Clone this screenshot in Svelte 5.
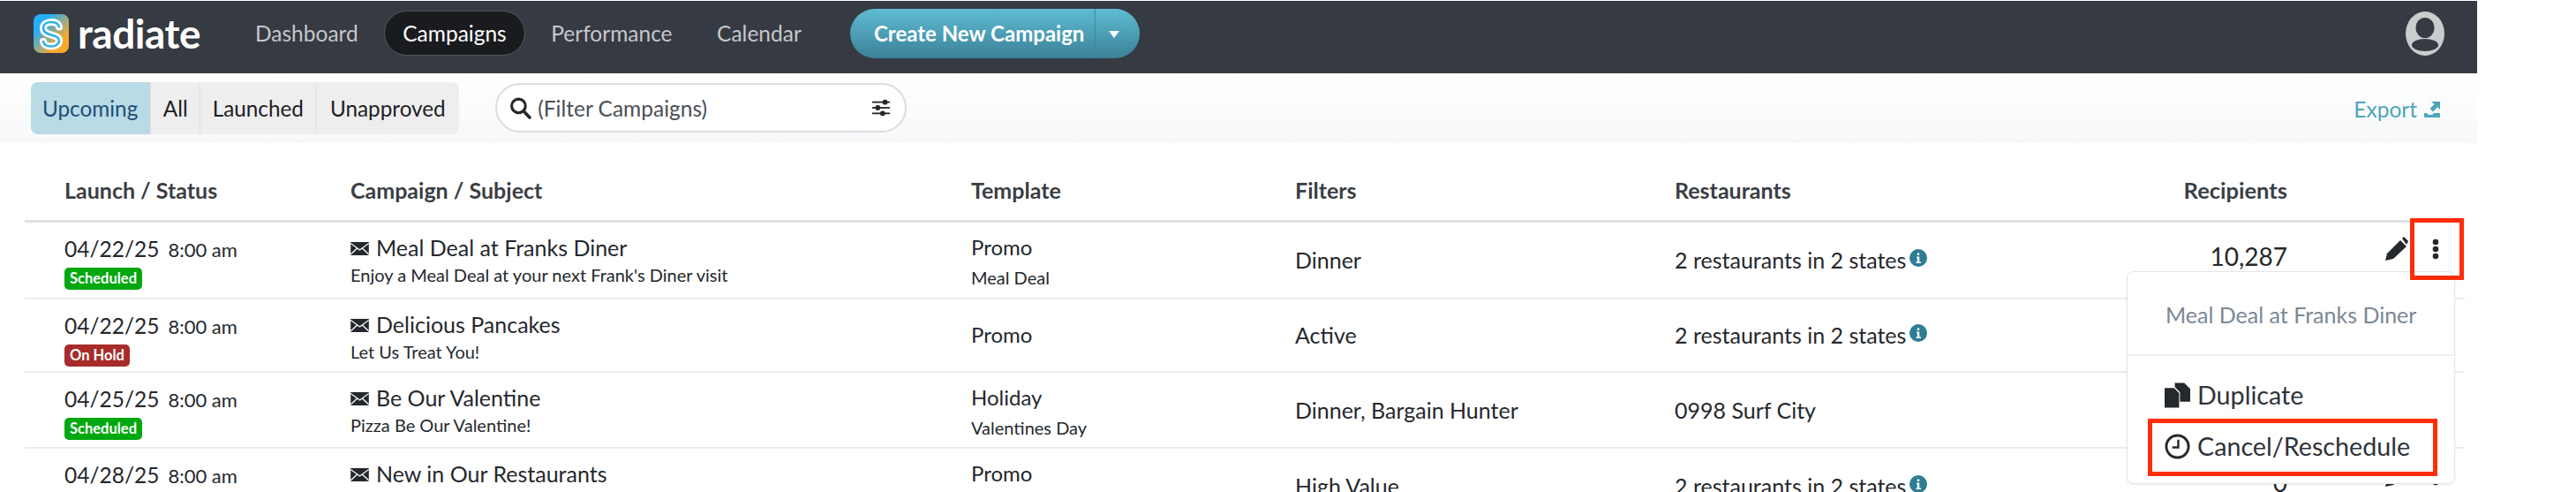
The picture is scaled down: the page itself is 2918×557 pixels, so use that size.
<script lang="ts">
	const navLinks = [
		{ label: 'Dashboard', active: false },
		{ label: 'Campaigns', active: true },
		{ label: 'Performance', active: false },
		{ label: 'Calendar', active: false }
	];

	const tabs = ['Upcoming', 'All', 'Launched', 'Unapproved'];

	const rows = [
		{ date: '04/22/25', status: 'Scheduled', name: 'Meal Deal at Franks Diner', subject: "Enjoy a Meal Deal at your next Frank's Diner visit", template: 'Promo', sub: 'Meal Deal', tall: true, filters: 'Dinner', places: '2 restaurants in 2 states', info: true, recipients: '10,287' },
		{ date: '04/22/25', status: 'On Hold', name: 'Delicious Pancakes', subject: 'Let Us Treat You!', template: 'Promo', sub: '', tall: false, filters: 'Active', places: '2 restaurants in 2 states', info: true, recipients: '' },
		{ date: '04/25/25', status: 'Scheduled', name: 'Be Our Valentine', subject: 'Pizza Be Our Valentine!', template: 'Holiday', sub: 'Valentines Day', tall: true, filters: 'Dinner, Bargain Hunter', places: '0998 Surf City', info: false, recipients: '' },
		{ date: '04/28/25', status: '', name: 'New in Our Restaurants', subject: '', template: 'Promo', sub: '', tall: true, filters: 'High Value', places: '2 restaurants in 2 states', info: true, recipients: '0' }
	];
</script>

<div class="page">
	<header class="topbar">
		<div class="brand">
			<svg class="logo" viewBox="0 0 40 44">
				<defs>
					<linearGradient id="logoGrad" x1="0" y1="0" x2="1" y2="1">
						<stop offset="0.25" stop-color="#26aef8" />
						<stop offset="0.75" stop-color="#f8a92c" />
					</linearGradient>
				</defs>
				<rect width="40" height="44" rx="8" fill="url(#logoGrad)" />
				<path d="M29 14.500C28 10 24 9 20 9c-5 0-9 2.500-9 7s4 6 9 7.500 9 2.500 9 6.500-4 6.500-9 6.500c-4 0-8-1-9-5.500" fill="none" stroke="#fff" stroke-width="8" stroke-linecap="round" />
				<path d="M29 14.500C28 10 24 9 20 9c-5 0-9 2.500-9 7s4 6 9 7.500 9 2.500 9 6.500-4 6.500-9 6.500c-4 0-8-1-9-5.500" fill="none" stroke="#2bb0ec" stroke-width="2.500" stroke-linecap="round" />
			</svg>
			<span class="wordmark">radiate</span>
		</div>
		<nav class="nav">
			{#each navLinks as link}
				<span class="nav-link" class:active={link.active}>{link.label}</span>
			{/each}
		</nav>
		<div class="create">
			<span class="create-main">Create New Campaign</span>
			<span class="create-caret"></span>
		</div>
		<svg class="avatar" viewBox="0 0 44 50">
			<ellipse cx="22" cy="25" rx="22" ry="25" fill="#cacccd" />
			<ellipse cx="22" cy="18.500" rx="10.500" ry="11.500" fill="#363a42" />
			<ellipse cx="22" cy="38" rx="15" ry="7" fill="#363a42" />
		</svg>
	</header>

	<div class="toolbar">
		<div class="tabs">
			{#each tabs as tab, i}
				<span class="tab" class:selected={i === 0}>{tab}</span>
			{/each}
		</div>
		<div class="search">
			<svg class="search-icon" viewBox="0 0 24 24">
				<circle cx="10" cy="10" r="7.500" fill="none" stroke="#25282d" stroke-width="3" />
				<path d="M15.500 15.500 22 22.500" stroke="#25282d" stroke-width="3.500" stroke-linecap="round" />
			</svg>
			<span class="search-text">(Filter Campaigns)</span>
			<svg class="sliders" viewBox="0 0 24 22" fill="#25282d">
				<rect x="1" y="3" width="22" height="2" />
				<rect x="1" y="10" width="22" height="2" />
				<rect x="1" y="17" width="22" height="2" />
				<circle cx="17" cy="4" r="3.200" />
				<circle cx="8" cy="11" r="3.200" />
				<circle cx="14" cy="18" r="3.200" />
			</svg>
		</div>
		<div class="export">
			<span>Export</span>
			<svg class="export-icon" viewBox="0 0 20 20" fill="#4ea5ba">
				<path d="M9 1h10v9l-3-2.800-5 5.300-3.500-3.500 5-5z" />
				<path d="M1 14h3l2 2h4l2-2h7v5H1z" />
			</svg>
		</div>
	</div>

	<section class="table">
		<div class="row head">
			<span>Launch / Status</span>
			<span>Campaign / Subject</span>
			<span>Template</span>
			<span>Filters</span>
			<span>Restaurants</span>
			<span class="num">Recipients</span>
			<span></span>
		</div>
		{#each rows as row}
			<div class="row body" class:tall={row.tall}>
				<div class="launch">
					<div class="when"><span>{row.date}</span><span class="time">8:00 am</span></div>
					{#if row.status}
						<span class="badge" class:hold={row.status === 'On Hold'}>{row.status}</span>
					{/if}
				</div>
				<div class="campaign">
					<div class="name">
						<svg class="mail" viewBox="0 0 22 16">
							<rect width="22" height="16" fill="#25282d" />
							<path d="M0 1.500 11 9.500 22 1.500M0 15 8 7.500M22 15 14 7.500" fill="none" stroke="#fff" stroke-width="1.400" />
						</svg>
						{row.name}
					</div>
					{#if row.subject}<div class="small">{row.subject}</div>{/if}
				</div>
				<div class="template">
					<div class="template-name">{row.template}</div>
					{#if row.sub}<div class="small">{row.sub}</div>{/if}
				</div>
				<div>{row.filters}</div>
				<div class="places">
					{row.places}
					{#if row.info}
						<svg class="info" viewBox="0 0 20 20">
							<circle cx="10" cy="10" r="10" fill="#2f7d92" />
							<path d="M8 8.500h3.200v6H13v1.500H7.500v-1.500h1.300v-4.500H8zM8.800 4.500h2.400V7H8.800z" fill="#fff" />
						</svg>
					{/if}
				</div>
				<div class="num count">{row.recipients}</div>
				<div class="actions">
					<svg class="pencil" viewBox="0 0 26 27" fill="#25282d">
						<path d="M0 27l2-8L17 4l7 7L9 25z" />
						<path d="M19 2l2-2 5 5-1 2-1 2z" />
					</svg>
					<svg class="dots" viewBox="0 0 8 24" fill="#25282d">
						<circle cx="4" cy="4" r="3.300" />
						<circle cx="4" cy="12" r="3.300" />
						<circle cx="4" cy="20" r="3.300" />
					</svg>
				</div>
			</div>
		{/each}
	</section>

	<div class="menu">
		<div class="menu-title">Meal Deal at Franks Diner</div>
		<div class="menu-items">
			<div class="menu-item">
				<svg class="menu-icon" viewBox="0 0 30 29" fill="#25282d">
					<path d="M0 6h11l6 6v17H0z" />
					<path d="M12 0h11l7 7v15H18V11l-6-6z" />
				</svg>
				Duplicate
			</div>
			<div class="menu-item">
				<svg class="menu-icon" viewBox="0 0 30 30">
					<circle cx="15" cy="15" r="13" fill="none" stroke="#25282d" stroke-width="3" />
					<path d="M16 7v9H9" fill="none" stroke="#25282d" stroke-width="2.500" />
				</svg>
				Cancel/Reschedule
			</div>
		</div>
	</div>

	<div class="callout callout-dots"></div>
	<div class="callout callout-menu"></div>
</div>

<style>
	:global(body) {
		margin: 0;
		background: #fff;
	}

	.page {
		position: relative;
		width: 2918px;
		height: 557px;
		overflow: hidden;
		font-family: Lato, 'Open Sans', sans-serif;
		font-size: 24.5px;
		color: #25282d;
	}

	.topbar {
		width: 2806px;
		height: 82px;
		margin-top: 1px;
		box-sizing: border-box;
		padding: 0 37px 9px 38px;
		display: flex;
		align-items: center;
		background: #363a42;
	}

	.brand {
		display: flex;
		align-items: center;
		gap: 10px;
		width: 230px;
	}

	.logo {
		width: 40px;
		height: 44px;
		flex-shrink: 0;
	}

	.wordmark {
		font-size: 46px;
		font-weight: 700;
		line-height: 1;
		color: #fff;
		letter-spacing: -0.5px;
	}

	.nav {
		display: flex;
		align-items: center;
		gap: 8.500px;
		width: 695px;
	}

	.nav-link {
		padding: 9.500px 20px;
		color: #c6c8ca;
		line-height: 30px;
		border: 1px solid transparent;
		border-radius: 26px;
	}

	.nav-link.active {
		color: #fff;
		background: #1a1b1e;
		border-color: #55585e;
	}

	.create {
		display: flex;
		width: 328px;
		height: 56px;
		font-size: 24px;
		font-weight: 700;
		color: #fff;
		background: linear-gradient(#5ebcd2, #3b8197);
		border-radius: 28px;
	}

	.create-main {
		width: 278px;
		box-sizing: border-box;
		padding-left: 27px;
		line-height: 56px;
		border-right: 1px solid #3f8aa0;
		white-space: nowrap;
	}

	.create-caret {
		width: 0;
		height: 0;
		margin: 25px 0 0 15px;
		border: 6px solid transparent;
		border-top: 8px solid #fff;
		border-bottom: 0;
	}

	.avatar {
		width: 44px;
		height: 50px;
		margin-left: auto;
	}

	.toolbar {
		width: 2806px;
		height: 79px;
		box-sizing: border-box;
		padding: 10px 41px 0 35px;
		display: flex;
		align-items: flex-start;
		background: linear-gradient(#fff, #f7f8f9);
	}

	.tabs {
		display: flex;
		height: 59px;
		font-size: 24.3px;
		background: #eee;
		border-radius: 8px;
		overflow: hidden;
	}

	.tab {
		padding: 0 13.500px;
		line-height: 59px;
		color: #1d2024;
		border-left: 1px solid #e0e0e0;
	}

	.tab:last-child {
		padding: 0 15.500px;
	}

	.tab.selected {
		padding: 0 14px 0 13px;
		color: #1f4e79;
		background: #b9dbe5;
		border-left: 0;
	}

	.search {
		width: 466px;
		height: 56px;
		box-sizing: border-box;
		margin: 1px 0 0 41px;
		padding: 0 16px 0 14px;
		display: flex;
		align-items: center;
		gap: 7px;
		background: #fff;
		border: 2px solid #d9dde3;
		border-radius: 28px;
	}

	.search-icon {
		width: 25px;
		height: 26px;
	}

	.search-text {
		color: #4a4f57;
	}

	.sliders {
		width: 22px;
		height: 20px;
		margin-left: auto;
	}

	.export {
		margin-left: auto;
		margin-top: 16px;
		display: flex;
		align-items: center;
		gap: 7px;
		color: #4ea5ba;
	}

	.export-icon {
		width: 20px;
		height: 20px;
	}

	.table {
		width: 2764px;
		margin-left: 28px;
	}

	.row {
		display: grid;
		grid-template-columns: 369px 703px 367px 430px 576px 118px 1fr;
		align-items: center;
		box-sizing: border-box;
	}

	.row > :first-child {
		padding-left: 45px;
	}

	.head {
		height: 90px;
		padding-top: 18px;
		font-size: 25px;
		font-weight: 700;
		color: #3a3e45;
		border-bottom: 3px solid #dee2e6;
	}

	.head .num {
		font-size: 25.500px;
	}

	.body {
		height: 83px;
		font-size: 25px;
		border-bottom: 2px solid #e9ecef;
	}

	.body.tall {
		height: 86.500px;
	}

	.launch {
		align-self: start;
		padding-top: 15px;
		display: flex;
		flex-direction: column;
		align-items: flex-start;
		gap: 6px;
		font-size: 24.500px;
	}

	.when {
		display: flex;
		align-items: baseline;
		gap: 10px;
		line-height: 29px;
	}

	.time {
		font-size: 22px;
	}

	.badge {
		padding: 0 6px;
		font-size: 16.500px;
		font-weight: 700;
		line-height: 25px;
		color: #fff;
		background: #00a80f;
		border-radius: 5px;
	}

	.badge.hold {
		background: #a82c2a;
	}

	.campaign {
		align-self: start;
		padding-top: 13px;
	}

	.name {
		display: flex;
		align-items: center;
		gap: 8px;
		line-height: 30px;
	}

	.mail {
		width: 21px;
		height: 15px;
		margin-top: 3px;
	}

	.small {
		margin-top: 4px;
		font-size: 20px;
		line-height: 24px;
	}

	.template {
		font-size: 24px;
	}

	.tall .template {
		align-self: start;
		padding-top: 13px;
	}

	.template-name {
		line-height: 30px;
	}

	.template .small {
		margin-top: 7px;
	}

	.places {
		display: flex;
		align-items: center;
	}

	.info {
		width: 20px;
		height: 20px;
		margin-left: 4px;
		margin-top: -4px;
	}

	.num {
		text-align: right;
	}

	.count {
		margin-top: -8px;
		font-size: 28px;
	}

	.actions {
		position: relative;
		height: 100%;
	}

	.pencil {
		position: absolute;
		left: 111px;
		top: 16px;
		width: 26px;
		height: 27px;
	}

	.dots {
		position: absolute;
		left: 164px;
		top: 18px;
		width: 8px;
		height: 24px;
	}

	.menu {
		position: absolute;
		left: 2409px;
		top: 307px;
		width: 372px;
		height: 241px;
		box-sizing: border-box;
		background: #fff;
		border: 1px solid #e4e6e9;
		border-radius: 8px;
		box-shadow: 0 1px 3px rgba(0, 0, 0, 0.08);
	}

	.menu-title {
		height: 95px;
		box-sizing: border-box;
		padding: 32px 0 0 43px;
		font-size: 25px;
		line-height: 32px;
		color: #7b8794;
		border-bottom: 2px solid #f0f1f3;
	}

	.menu-items {
		padding: 24px 0 0 42px;
	}

	.menu-item {
		display: flex;
		align-items: center;
		gap: 8px;
		height: 40px;
		margin-bottom: 18px;
		font-size: 28.700px;
		color: #2f3339;
	}

	.menu-icon {
		width: 29px;
		height: 29px;
		flex-shrink: 0;
	}

	.callout {
		position: absolute;
		box-sizing: border-box;
		border: 5px solid #ff2d0a;
	}

	.callout-dots {
		left: 2730px;
		top: 247px;
		width: 61px;
		height: 70px;
	}

	.callout-menu {
		left: 2433px;
		top: 474px;
		width: 328px;
		height: 65px;
	}
</style>
